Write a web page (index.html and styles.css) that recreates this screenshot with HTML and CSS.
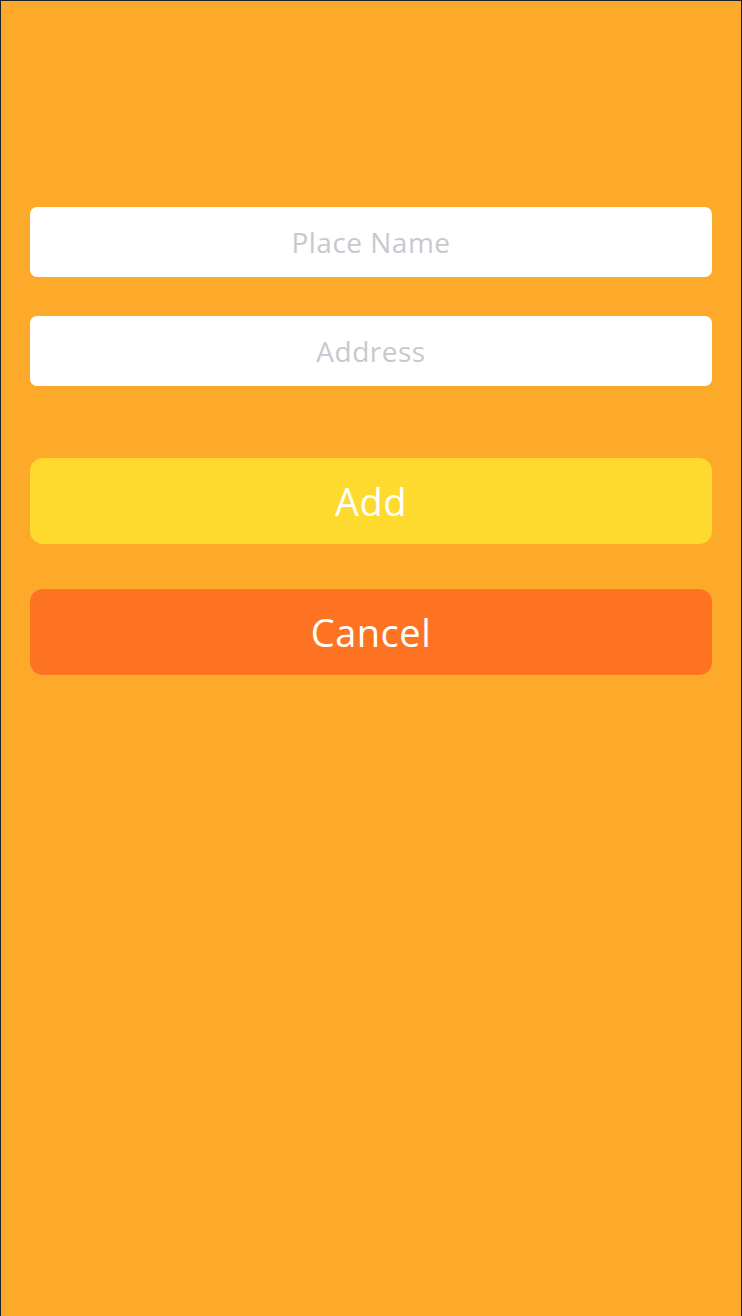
FILE: index.html
```html
<!DOCTYPE html>
<html>
<head>
<meta charset="utf-8">
<link rel="stylesheet" href="styles.css">
</head>
<body>
<div class="screen">
  <form class="form">
    <input class="field" type="text" placeholder="Place Name">
    <input class="field field-second" type="text" placeholder="Address">
    <button class="btn btn-add" type="button">Add</button>
    <button class="btn btn-cancel" type="button">Cancel</button>
  </form>
</div>
</body>
</html>
```
FILE: styles.css
```css
html, body {
  margin: 0;
  padding: 0;
  background: #fda92a;
}
.screen {
  box-sizing: border-box;
  width: 742px;
  height: 1316px;
  background: #fda92a;
  border: 1px solid #1c2328;
  border-bottom: none;
  padding: 206px 29px 0 29px;
  font-family: "Open Sans", "Noto Sans", sans-serif;
}
.form {
  display: flex;
  flex-direction: column;
}
.field {
  box-sizing: border-box;
  height: 70px;
  border: none;
  border-radius: 7px;
  background: #ffffff;
  text-align: center;
  font-family: inherit;
  font-size: 28px;
  letter-spacing: 0.5px;
  color: #333;
  outline: none;
  padding: 0;
}
.field::placeholder {
  color: #c8c8cd;
}
.field-second {
  margin-top: 39px;
}
.btn {
  box-sizing: border-box;
  height: 86px;
  border: none;
  border-radius: 13px;
  font-family: inherit;
  font-size: 38px;
  letter-spacing: 0.5px;
  color: #ffffff;
  padding: 0;
}
.btn-add {
  margin-top: 72px;
  background: #fed92e;
}
.btn-cancel {
  margin-top: 45px;
  background: #fe7322;
}
```
